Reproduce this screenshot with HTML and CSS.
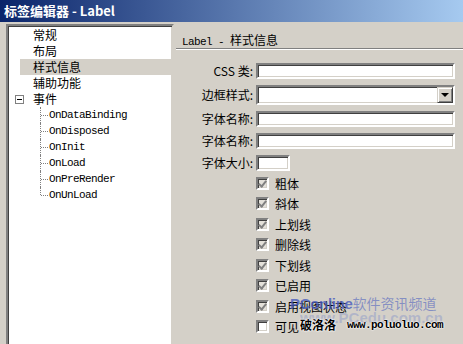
FILE: index.html
```
<!DOCTYPE html>
<html>
<head>
    <meta charset="UTF-8">
    <title>标签编辑器 - Label</title>
    <link rel="stylesheet" href="styles.css">
</head>
<body>
    <div class="window">
        <div class="titlebar">标签编辑器 - Label</div>
        <div class="main">
            <div class="tree">
                <div class="row top">常规</div>
                <div class="row top">布局</div>
                <div class="row top selected">样式信息</div>
                <div class="row top">辅助功能</div>
                <div class="row parent"><span class="expander"></span>事件</div>
                <div class="row child">OnDataBinding</div>
                <div class="row child">OnDisposed</div>
                <div class="row child">OnInit</div>
                <div class="row child">OnLoad</div>
                <div class="row child">OnPreRender</div>
                <div class="row child last">OnUnLoad</div>
            </div>
            <div class="panel">
                <div class="panel-head"><span class="mono">Label - </span>样式信息</div>
                <div class="form">
                    <label>CSS 类:</label>
                    <div class="field h16"></div>
                    <label>边框样式:</label>
                    <div class="field select"><span class="drop"></span></div>
                    <label>字体名称:</label>
                    <div class="field h16"></div>
                    <label>字体名称:</label>
                    <div class="field h16"></div>
                    <label>字体大小:</label>
                    <div class="field h16 small"></div>
                </div>
                <div class="checks">
                    <div class="check"><span class="box on"></span>粗体</div>
                    <div class="check"><span class="box on"></span>斜体</div>
                    <div class="check"><span class="box on"></span>上划线</div>
                    <div class="check"><span class="box on"></span>删除线</div>
                    <div class="check"><span class="box on"></span>下划线</div>
                    <div class="check"><span class="box on"></span>已启用</div>
                    <div class="check"><span class="box on"></span>启用视图状态</div>
                    <div class="check"><span class="box"></span>可见</div>
                </div>
            </div>
        </div>
        <div class="wm-pconline"><b>PConline</b>软件资讯频道</div>
        <div class="wm-pcedu">www.PCedu.com.cn</div>
        <div class="wm-poluo"><span class="cn">破洛洛</span><span class="url">www.poluoluo.com</span></div>
    </div>
</body>
</html>
```
FILE: styles.css
```
body {
    margin: 0;
    background: #d4d0c8;
    font-family: "Noto Sans CJK SC", "Liberation Sans", sans-serif;
    font-size: 12px;
    color: #000;
    overflow: hidden;
}

.window {
    position: relative;
    width: 463px;
    height: 344px;
    display: flex;
    flex-direction: column;
    overflow: hidden;
}

.titlebar {
    height: 22px;
    line-height: 22px;
    padding-left: 4px;
    background: linear-gradient(to right, #0a246a, #a6caf0);
    color: #fff;
    font-weight: bold;
    font-size: 13px;
}

.main {
    flex: 1;
    min-height: 0;
    display: flex;
    padding-top: 2px;
}

/* sunken win2k style frame */
.tree,
.field,
.box {
    border: 2px solid;
    border-color: #808080 #fff #fff #808080;
    box-shadow: inset 1px 1px #404040, inset -1px -1px #d4d0c8;
    background: #fff;
}

.tree {
    width: 168px;
    margin-left: 6px;
    margin-bottom: -6px;
    box-sizing: border-box;
    padding-top: 1px;
    border-right-color: #d4d0c8;
}

.row {
    position: relative;
    height: 16px;
    line-height: 16px;
    white-space: nowrap;
}

.row.top {
    padding-left: 25px;
}

.row.selected {
    margin-left: 12px;
    padding-left: 13px;
    background: #d4d0c8;
}

.row.parent {
    display: flex;
    align-items: center;
    padding-left: 7px;
}

.expander {
    position: relative;
    width: 9px;
    height: 9px;
    box-sizing: border-box;
    border: 1px solid #808080;
    background: #fff;
    margin-right: 9px;
}

.expander::after {
    content: "";
    position: absolute;
    left: 1px;
    top: 3px;
    width: 5px;
    height: 1px;
    background: #000;
}

.row.child {
    padding-left: 41px;
    font-family: "Liberation Mono", "DejaVu Sans Mono", monospace;
    font-size: 11px;
    letter-spacing: -0.6px;
}

.row.child::before {
    content: "";
    position: absolute;
    left: 32px;
    top: 0;
    height: 16px;
    border-left: 1px dotted #808080;
}

.row.child.last::before {
    height: 8px;
}

.row.child::after {
    content: "";
    position: absolute;
    left: 33px;
    top: 8px;
    width: 7px;
    border-top: 1px dotted #808080;
}

.panel {
    flex: 1;
}

.panel-head {
    height: 25px;
    box-sizing: border-box;
    margin-left: 2px;
    padding: 8px 0 0 6px;
    line-height: 16px;
    border-bottom: 1px solid #808080;
    box-shadow: 0 1px #fff;
}

.mono {
    font-family: "Liberation Mono", "DejaVu Sans Mono", monospace;
    font-size: 11px;
    letter-spacing: -0.6px;
    white-space: pre;
}

.form {
    display: grid;
    grid-template-columns: 79px 1fr;
    column-gap: 3px;
    row-gap: 6px;
    margin-top: 14px;
    padding-right: 8px;
    align-items: center;
}

.form label {
    text-align: right;
    line-height: 16px;
    white-space: nowrap;
}

.field {
    box-sizing: border-box;
    height: 16px;
}

.field.small {
    width: 34px;
}

.field.select {
    position: relative;
    height: 20px;
}

.drop {
    position: absolute;
    right: 0;
    top: 0;
    width: 16px;
    height: 16px;
    box-sizing: border-box;
    background: #d4d0c8;
    border: 1px solid;
    border-color: #d4d0c8 #404040 #404040 #d4d0c8;
    box-shadow: inset 1px 1px #fff, inset -1px -1px #808080;
}

.drop::after {
    content: "";
    position: absolute;
    left: 3px;
    top: 5px;
    border-left: 4px solid transparent;
    border-right: 4px solid transparent;
    border-top: 4px solid #000;
}

.checks {
    margin-top: 2px;
    padding-left: 82px;
}

.check {
    display: flex;
    align-items: center;
    gap: 6px;
    height: 20.5px;
}

.box {
    position: relative;
    width: 13px;
    height: 13px;
    box-sizing: border-box;
}

.box.on {
    background: #e4e1da;
}

.box.on::after {
    content: "";
    position: absolute;
    left: 2px;
    top: 0px;
    width: 3px;
    height: 6px;
    border-right: 2px solid #808080;
    border-bottom: 2px solid #808080;
    transform: rotate(40deg);
}

.wm-pconline {
    position: absolute;
    left: 290px;
    top: 294px;
    font-size: 14px;
    line-height: 18px;
    color: rgba(80, 100, 190, 0.6);
    white-space: nowrap;
}

.wm-pconline b {
    font-family: "Liberation Sans", sans-serif;
    font-size: 15px;
    letter-spacing: -0.3px;
    color: rgba(70, 90, 190, 0.8);
}

.wm-pcedu {
    position: absolute;
    left: 300px;
    top: 309px;
    font-family: "Liberation Sans", sans-serif;
    font-weight: bold;
    font-size: 15px;
    color: rgba(110, 130, 200, 0.35);
    white-space: nowrap;
}

.wm-poluo {
    position: absolute;
    left: 300px;
    top: 316px;
    display: flex;
    gap: 11px;
    line-height: 18px;
    white-space: nowrap;
    text-shadow: 0 0 2px #fff, 0 0 2px #fff, 0 0 1px #fff;
}

.wm-poluo .cn {
    font-weight: bold;
}

.wm-poluo .url {
    font-family: "Liberation Mono", monospace;
    font-size: 11px;
    letter-spacing: -0.6px;
    font-weight: bold;
}
```
